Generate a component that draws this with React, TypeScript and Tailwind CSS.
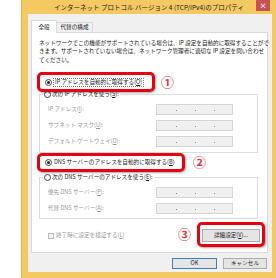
import React from 'react'

const jp = "font-['Noto_Sans_CJK_JP',sans-serif]"

function Key({ k }: { k: string }) {
  return <span className="underline underline-offset-[1px]">{k}</span>
}

function Radio({ checked }: { checked?: boolean }) {
  return (
    <span className="flex h-[7px] w-[7px] shrink-0 items-center justify-center rounded-full border border-[#444] bg-white">
      {checked && <span className="h-[3px] w-[3px] rounded-full bg-[#222]" />}
    </span>
  )
}

function IpField() {
  return (
    <div className="flex h-[11px] w-[77px] items-center gap-[18px] border border-[#d5d5d5] bg-[#f0f0f0] pl-[19px] pt-[2px]">
      <span className="h-[1px] w-[1px] bg-[#8a8a8a]" />
      <span className="h-[1px] w-[1px] bg-[#8a8a8a]" />
      <span className="h-[1px] w-[1px] bg-[#8a8a8a]" />
    </div>
  )
}

function FieldRow({ label, k }: { label: string; k: string }) {
  return (
    <div className="mt-[5px] flex items-center pl-[8px]">
      <span className="w-[108px] text-[#9a9a9a]">
        {label}(<Key k={k} />):
      </span>
      <IpField />
    </div>
  )
}

function Marker({ box, num, center }: { box: string; num: string; center: string }) {
  return (
    <>
      <div className={`absolute rounded-[5px] border-[3px] border-[#e60012] shadow-[1px_1px_2px_rgba(0,0,0,0.35)] ${box}`} />
      <div className={`absolute flex h-[13px] w-[13px] items-center justify-center text-[13px] font-bold leading-none text-[#e8383d] ${center}`}>
        {num}
      </div>
    </>
  )
}

export default function App() {
  return (
    <div className={`relative flex h-[278px] w-[276px] overflow-hidden bg-white pl-[21px] text-[5.6px] leading-[8.5px] text-[#1a1a1a] ${jp}`}>
      <div className="flex h-full w-[255px] flex-col border-l border-[#e3b54a] bg-[#f5c962]">
        <div className="relative flex h-[14px] shrink-0 items-center justify-center text-[6.5px] text-[#222]">
          インターネット プロトコル バージョン 4 (TCP/IPv4)のプロパティ
          <div className="absolute right-[6px] top-0 flex h-[11px] w-[14px] items-center justify-center bg-[#c75050] text-[7px] font-bold text-white">
            ×
          </div>
        </div>

        <div className="ml-[6px] mr-[4px] flex flex-1 flex-col bg-[#f0f0f0] pl-[3px] pr-[4px] pt-[6px]">
          <div className="flex h-[12px] items-end">
            <div className="relative z-10 -mb-[1px] flex h-[13px] w-[26px] items-center justify-center border border-b-0 border-[#d9d9d9] bg-white">
              全般
            </div>
            <div className="flex h-[10px] w-[36px] items-center justify-center border border-b-0 border-l-0 border-[#d9d9d9] bg-[#f0f0f0]">
              代替の構成
            </div>
          </div>

          <div className="flex h-[221px] flex-col border border-[#d9d9d9] bg-white pl-[7px] pr-[9px] pt-[5.75px]">
            <div className="whitespace-nowrap">
              <div>ネットワークでこの機能がサポートされている場合は、IP 設定を自動的に取得することがで</div>
              <div>きます。サポートされていない場合は、ネットワーク管理者に適切な IP 設定を問い合わせ</div>
              <div>てください。</div>
            </div>

            <div className="mt-[13.25px] flex h-[9px] items-center gap-[1px] pl-[6px]">
              <Radio checked />
              <span className="border border-dotted border-[#777] px-[1px] leading-[7px]">
                IP アドレスを自動的に取得する(<Key k="O" />)
              </span>
            </div>

            <fieldset className="mt-[3px] border border-[#dcdcdc] pb-[5px]">
              <legend className="ml-[3px] h-[9px] px-[1px]">
                <span className="flex h-[9px] items-center gap-[1px]">
                  <Radio />
                  <span>次の IP アドレスを使う(<Key k="S" />):</span>
                </span>
              </legend>
              <FieldRow label="IP アドレス" k="I" />
              <FieldRow label="サブネット マスク" k="U" />
              <FieldRow label="デフォルト ゲートウェイ" k="D" />
            </fieldset>

            <div className="mt-[5px] flex h-[9px] items-center gap-[2px] pl-[6px]">
              <Radio checked />
              <span>DNS サーバーのアドレスを自動的に取得する(<Key k="B" />)</span>
            </div>

            <fieldset className="mt-[6px] border border-[#dcdcdc] pb-[4px]">
              <legend className="ml-[3px] h-[9px] px-[1px]">
                <span className="flex h-[9px] items-center gap-[1px]">
                  <Radio />
                  <span>次の DNS サーバーのアドレスを使う(<Key k="E" />):</span>
                </span>
              </legend>
              <FieldRow label="優先 DNS サーバー" k="P" />
              <FieldRow label="代替 DNS サーバー" k="A" />
            </fieldset>

            <div className="-mr-[2px] mt-[11px] flex h-[12px] items-center justify-between">
              <div className="flex items-center gap-[2px] pl-[9px] text-[#9a9a9a]">
                <span className="h-[6px] w-[6px] border border-[#bcbcbc] bg-[#f4f4f4]" />
                <span>終了時に設定を検証する(<Key k="L" />)</span>
              </div>
              <div className="flex h-[13px] w-[58px] items-center justify-center border border-[#adadad] bg-[#e5e5e5]">
                詳細設定(<Key k="V" />)...
              </div>
            </div>
          </div>

          <div className="mr-[1px] mt-[5px] flex justify-end gap-[6px]">
            <div className="flex h-[11px] w-[45px] items-center justify-center border border-[#3c7fb1] bg-[#e5e5e5]">
              OK
            </div>
            <div className="flex h-[11px] w-[44px] items-center justify-center border border-[#adadad] bg-[#e5e5e5]">
              キャンセル
            </div>
          </div>
        </div>

        <div className="h-[6px] shrink-0" />
      </div>

      <Marker box="left-[37px] top-[72px] h-[20px] w-[118px]" num="①" center="left-[161px] top-[75px]" />
      <Marker box="left-[37px] top-[153px] h-[19px] w-[148px]" num="②" center="left-[193px] top-[155px]" />
      <Marker box="left-[197px] top-[222px] h-[25px] w-[68px]" num="③" center="left-[178px] top-[227px]" />
    </div>
  )
}
